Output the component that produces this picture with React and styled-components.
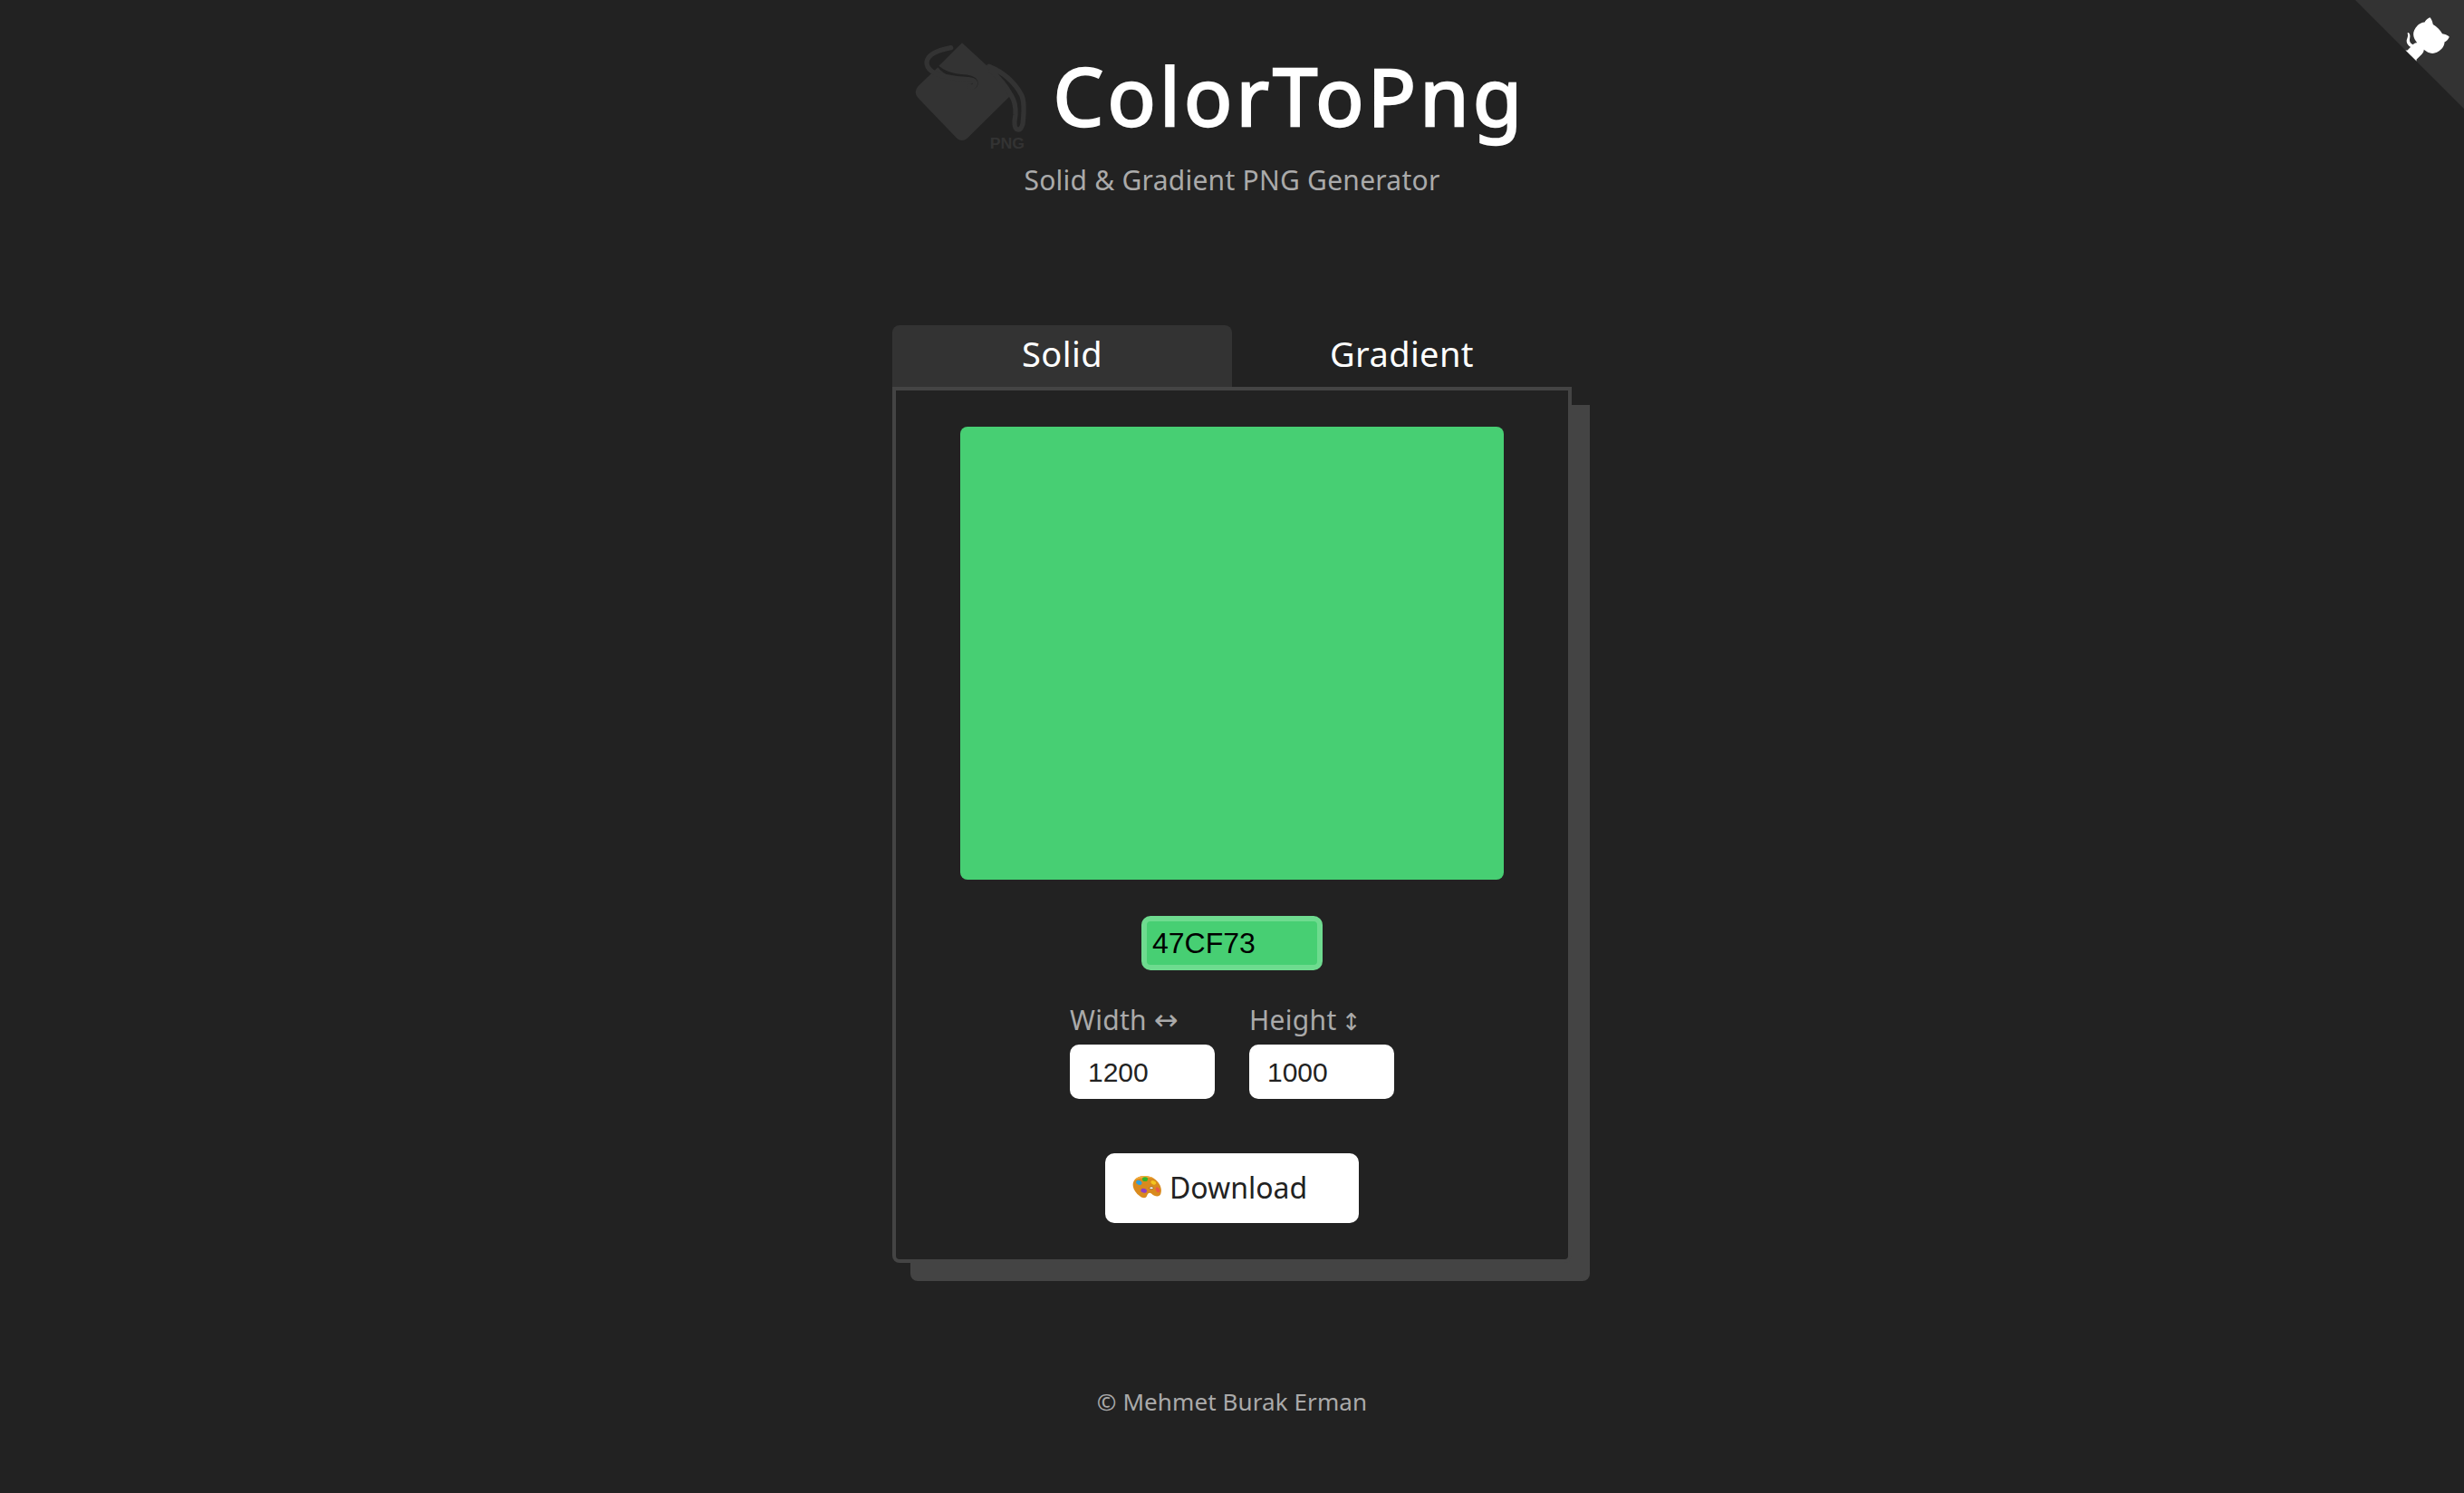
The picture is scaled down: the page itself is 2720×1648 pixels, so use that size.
import React from "react";
import styled, { createGlobalStyle } from "styled-components";

const Global = createGlobalStyle`
  html, body { margin: 0; padding: 0; background: #222; }
  body { font-family: "Noto Sans", "Open Sans", sans-serif; color: #fff; overflow: hidden; }
  * { box-sizing: border-box; }
`;

const Page = styled.div`
  position: relative;
  width: 2720px;
  height: 1648px;
  padding-top: 30px;
  display: flex;
  flex-direction: column;
  align-items: center;
`;
const Corner = styled.a`
  position: absolute;
  top: 0;
  right: 0;
  line-height: 0;
`;
const Brand = styled.header`
  display: flex;
  align-items: center;
  gap: 12px;
  height: 150px;
  padding-right: 35px;
`;
const Title = styled.h1`
  margin: 0;
  font-size: 88px;
  line-height: 1;
  font-weight: 400;
  color: #fff;
  -webkit-text-stroke: 2.5px #fff;
  letter-spacing: 4.3px;
`;
const Subtitle = styled.p`
  margin: 0 0 139px;
  height: 40px;
  line-height: 38px;
  font-size: 30px;
  letter-spacing: 0.25px;
  color: #aaa;
`;
const Card = styled.main`
  width: 750px;
`;
const Tabs = styled.div`
  display: flex;
  height: 68px;
`;
const Tab = styled.button`
  flex: 1;
  border: 0;
  padding: 0 0 7px;
  font: inherit;
  font-size: 38px;
  letter-spacing: 0.4px;
  line-height: 1;
  color: #fff;
  background: ${(p) => (p.$active ? "#333" : "transparent")};
  border-radius: 8px 8px 0 0;
`;
const Panel = styled.section`
  display: flex;
  flex-direction: column;
  align-items: center;
  height: 967px;
  padding-top: 40px;
  border: 4px solid #444;
  border-radius: 0 0 8px 8px;
  background: #222;
  box-shadow: 20px 20px 0 #444;
`;
const Swatch = styled.div`
  width: 600px;
  height: 500px;
  flex: none;
  border-radius: 8px;
  background: #47cf73;
`;
const ColorInput = styled.input`
  width: 200px;
  height: 60px;
  margin-top: 40px;
  padding: 0 6px;
  border: 6px solid #6edb8f;
  border-radius: 10px;
  outline: none;
  background: #47cf73;
  color: #000;
  font-family: "Liberation Sans", Arial, sans-serif;
  font-size: 32px;
`;
const Sizes = styled.div`
  display: flex;
  gap: 38px;
  margin-top: 35px;
`;
const Field = styled.label`
  display: flex;
  flex-direction: column;
  gap: 7px;
  width: 160px;
`;
const FieldLabel = styled.span`
  height: 40px;
  line-height: 40px;
  font-size: 30px;
  letter-spacing: 0.3px;
  color: #aaa;
  white-space: nowrap;
`;
const Arrow = styled.span`
  font-family: "DejaVu Sans", sans-serif;
  font-size: ${(p) => p.$size}px;
  margin-left: ${(p) => p.$shift}px;
`;
const NumberInput = styled.input`
  width: 160px;
  height: 60px;
  padding: 2px 20px 0;
  border: 0;
  border-radius: 10px;
  outline: none;
  background: #fff;
  color: #222;
  font-family: "Liberation Sans", Arial, sans-serif;
  font-size: 30px;
`;
const DownloadButton = styled.button`
  display: flex;
  align-items: center;
  gap: 9px;
  width: 280px;
  height: 77px;
  margin-top: 60px;
  padding: 0 30px 3px;
  border: 0;
  border-radius: 10px;
  background: #fff;
  color: #222;
  font: inherit;
  font-size: 32px;
`;
const Footer = styled.footer`
  margin-top: 133px;
  height: 40px;
  line-height: 40px;
  font-size: 26px;
  letter-spacing: 0.1px;
  color: #aaa;
`;

const OctoCorner = () => (
  <Corner href="#" aria-label="View source">
    <svg width="120" height="120" viewBox="0 0 250 250">
      <path fill="#333" d="M0,0 L115,115 L130,115 L142,142 L250,250 L250,0 Z" />
      <path fill="#fff" d="M128.3,109.0 C113.8,99.7 119.0,89.6 119.0,89.6 C122.0,82.7 120.5,78.6 120.5,78.6 C119.2,72.0 123.4,76.3 123.4,76.3 C127.3,80.9 125.5,87.3 125.5,87.3 C122.9,97.6 130.6,101.9 134.4,103.2" />
      <path fill="#fff" d="M115.0,115.0 C114.9,115.1 118.7,116.5 119.8,115.4 L133.7,101.6 C136.9,99.2 139.9,98.4 142.2,98.6 C133.8,88.0 127.5,74.4 143.8,58.0 C148.5,53.4 154.0,51.2 159.7,51.0 C160.3,49.4 163.2,43.6 171.4,40.1 C171.4,40.1 176.1,42.5 178.8,56.2 C183.1,58.6 187.2,61.8 190.9,65.4 C194.5,69.0 197.7,73.2 200.1,77.6 C213.8,80.2 216.3,84.9 216.3,84.9 C212.7,93.1 206.9,96.0 205.4,96.6 C205.1,102.4 203.0,107.8 198.3,112.5 C181.9,128.9 168.3,122.5 157.7,114.1 C157.9,116.9 156.7,120.9 152.7,124.9 L141.0,136.5 C139.8,137.7 141.6,141.9 141.8,141.8 Z" />
    </svg>
  </Corner>
);

const Logo = () => (
  <svg width="150" height="150" viewBox="0 0 450 450" fill="none">
    <path
      fill="#333"
      d="M183 52 L268 130 L345 225 L200 368 Q183 382 166 368 L38 235 Q20 215 38 195 L103 133 Q130 170 205 172 Q222 174 218 186 L210 190 Q206 204 222 204 Q240 198 234 176 Q222 156 180 156 Q130 150 106 128 Z"
    />
    <path
      stroke="#333"
      strokeWidth="16"
      strokeLinecap="round"
      d="M146 68 Q70 82 66 116 Q66 150 130 164 Q165 172 205 173 Q232 176 225 192 Q218 202 208 196"
    />
    <path
      stroke="#333"
      strokeWidth="16"
      strokeLinecap="round"
      strokeLinejoin="round"
      d="M272 130 Q345 160 380 225 Q392 250 384 320 Q378 344 364 338 Q352 330 360 290 Q362 250 345 225 Q320 180 280 145"
    />
    <text x="275" y="402" fill="#333" fontFamily="Liberation Sans, Arial, sans-serif" fontWeight="700" fontSize="48" textLength="115" lengthAdjust="spacingAndGlyphs">PNG</text>
  </svg>
);

const Palette = () => (
  <svg width="32" height="26" viewBox="0 0 96 78">
    <path fill="#d98a1e" d="M6 18 C18 0 50 -2 72 12 C90 24 100 44 94 62 C90 74 74 72 64 62 C56 56 50 62 48 70 C44 80 30 76 20 66 C6 54 -4 34 6 18 Z" />
    <path fill="#f0ab3c" d="M6 18 C18 0 50 -2 72 12 C50 6 22 10 6 18 Z" />
    <ellipse cx="22" cy="25" rx="10" ry="7" fill="#2f9fdc" transform="rotate(25 22 25)" />
    <ellipse cx="42" cy="14" rx="9" ry="7" fill="#2fb52c" />
    <ellipse cx="70" cy="25" rx="9" ry="6" fill="#f3c51f" transform="rotate(25 70 25)" />
    <ellipse cx="84" cy="49" rx="6" ry="9" fill="#e9584a" transform="rotate(-25 84 49)" />
    <ellipse cx="38" cy="52" rx="10" ry="7" fill="#8e3fc4" transform="rotate(15 38 52)" />
    <ellipse cx="63" cy="43" rx="6" ry="4" fill="#fff" stroke="#5b3a14" strokeWidth="1.5" />
  </svg>
);

export default function App() {
  return (
    <Page>
      <Global />
      <OctoCorner />
      <Brand>
        <Logo />
        <Title>ColorToPng</Title>
      </Brand>
      <Subtitle>Solid &amp; Gradient PNG Generator</Subtitle>
      <Card>
        <Tabs>
          <Tab $active>Solid</Tab>
          <Tab>Gradient</Tab>
        </Tabs>
        <Panel>
          <Swatch />
          <ColorInput readOnly value="47CF73" />
          <Sizes>
            <Field>
              <FieldLabel>Width <Arrow $size={32} $shift={0}>↔</Arrow></FieldLabel>
              <NumberInput readOnly value="1200" />
            </Field>
            <Field>
              <FieldLabel>Height <Arrow $size={26} $shift={-3}>↕</Arrow></FieldLabel>
              <NumberInput readOnly value="1000" />
            </Field>
          </Sizes>
          <DownloadButton>
            <Palette />
            Download
          </DownloadButton>
        </Panel>
      </Card>
      <Footer>© Mehmet Burak Erman</Footer>
    </Page>
  );
}
